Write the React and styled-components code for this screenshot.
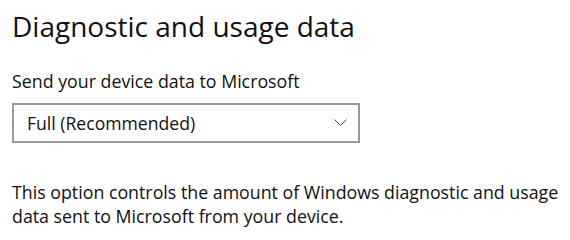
import styled, { createGlobalStyle } from "styled-components";

const GlobalStyle = createGlobalStyle`
  html, body {
    margin: 0;
    padding: 0;
    background: #ffffff;
  }
  body {
    font-family: "Open Sans", "Noto Sans", sans-serif;
    color: #000000;
  }
`;

const Page = styled.main`
  width: 570px;
  height: 240px;
  box-sizing: border-box;
  padding: 8px 0 0 12px;
  overflow: hidden;
`;

const Title = styled.h1`
  margin: 0;
  font-size: 28px;
  font-weight: 400;
  line-height: 36px;
  color: #111;
`;

const Label = styled.div`
  margin-top: 25px;
  font-size: 17.8px;
  line-height: 24px;
  color: #111;
`;

const Select = styled.div`
  margin-top: 10px;
  width: 348px;
  height: 40px;
  box-sizing: border-box;
  border: 2px solid #999;
  display: flex;
  align-items: center;
  justify-content: space-between;
  padding: 0 11px 1px 13px;
  font-size: 17.6px;
  line-height: 24px;
  color: #111;
`;

const Chevron = styled.svg`
  width: 13px;
  height: 7px;
`;

const Description = styled.p`
  margin: 37px 0 0;
  width: 556px;
  font-size: 17.8px;
  line-height: 24px;
  color: #111;
`;

const App = () => {
  return (
    <>
      <GlobalStyle />
      <Page>
        <Title>Diagnostic and usage data</Title>
        <Label>Send your device data to Microsoft</Label>
        <Select>
          <span>Full (Recommended)</span>
          <Chevron viewBox="0 0 13 7">
            <path d="M0.5 0.5 L6.5 6.5 L12.5 0.5" fill="none" stroke="#444" strokeWidth="1" />
          </Chevron>
        </Select>
        <Description>
          This option controls the amount of Windows diagnostic and usage
          data sent to Microsoft from your device.
        </Description>
      </Page>
    </>
  );
};

export default App;
